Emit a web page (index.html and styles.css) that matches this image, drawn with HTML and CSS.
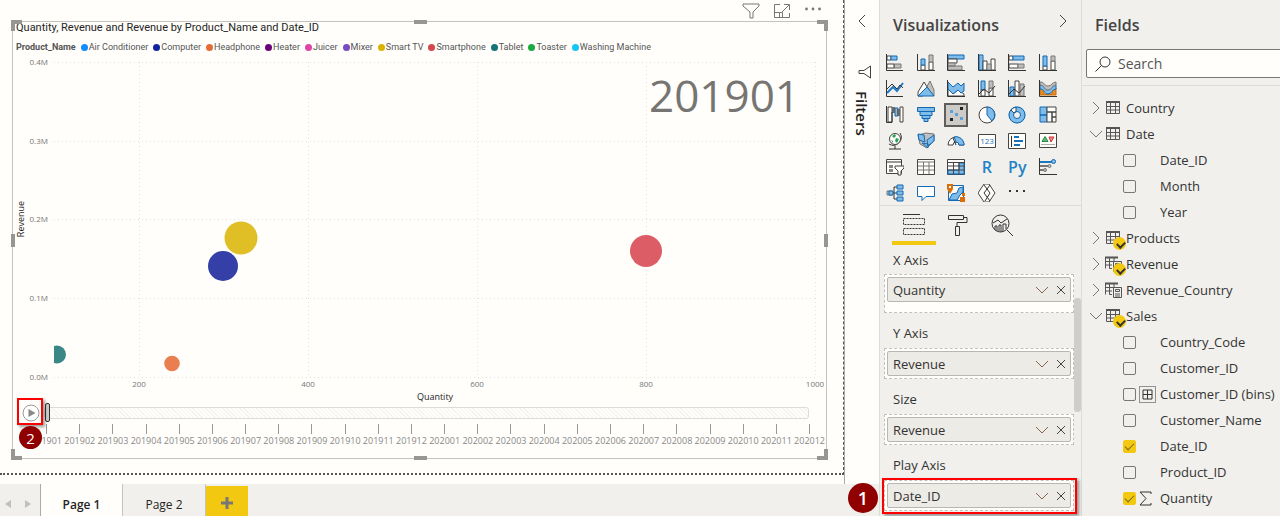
FILE: index.html
```html
<!DOCTYPE html>
<html lang="en">
<head>
  <meta charset="UTF-8" />
  <meta name="viewport" content="width=device-width, initial-scale=1.0"/>
  <title>Product Sales Report</title>
  <link rel="stylesheet" href="styles.css">
</head>
<body>
  <div class="report">
    <div class="report-top">
      <main class="canvas">
        <div class="page-area">
          <div class="visual-tools">
            <button class="icon-btn" aria-label="Filter"><svg width="18" height="16" viewBox="0 0 18 16"><path d="M1 1h16v2l-6 6v6H8V9L1 3z"/></svg></button>
            <button class="icon-btn" aria-label="Focus mode"><svg width="16" height="14" viewBox="0 0 16 14"><path d="M6 .5H.5v13h15V9M.5 8.5h5v5M8 8l7-7M10 .5h5.5V6M5.5 8.5h3v5"/></svg></button>
            <button class="icon-btn" aria-label="More options"><svg width="18" height="14" viewBox="0 0 18 14"><g fill="#777" stroke="none"><circle cx="2.5" cy="5" r="1.4"/><circle cx="9" cy="5" r="1.4"/><circle cx="15.5" cy="5" r="1.4"/></g></svg></button>
          </div>

          <section class="visual">
            <span class="handle top-left"></span><span class="handle top"></span><span class="handle top-right"></span>
            <span class="handle left"></span><span class="handle right"></span>
            <span class="handle bottom-left"></span><span class="handle bottom"></span><span class="handle bottom-right"></span>

            <h1>Quantity, Revenue and Revenue by Product_Name and Date_ID</h1>
            <ul class="legend">
              <li class="legend-title">Product_Name</li>
              <li><i class="dot air"></i>Air Conditioner</li>
              <li><i class="dot computer"></i>Computer</li>
              <li><i class="dot headphone"></i>Headphone</li>
              <li><i class="dot heater"></i>Heater</li>
              <li><i class="dot juicer"></i>Juicer</li>
              <li><i class="dot mixer"></i>Mixer</li>
              <li><i class="dot tv"></i>Smart TV</li>
              <li><i class="dot phone"></i>Smartphone</li>
              <li><i class="dot tablet"></i>Tablet</li>
              <li><i class="dot toaster"></i>Toaster</li>
              <li><i class="dot washing"></i>Washing Machine</li>
            </ul>

            <svg class="plot" viewBox="0 0 813 349">
              <clipPath id="plotArea"><rect x="41" y="0" width="765" height="324"/></clipPath>
              <g class="grid-lines">
                <path d="M41 8.500H802M41 87.500H802M41 165.500H802M41 244.500H802M41 323.500H802"/>
                <path d="M126.500 8V323M295.500 8V323M464.500 8V323M633.500 8V323M802.500 8V323"/>
              </g>
              <g class="tick-text" text-anchor="end">
                <text x="35" y="11">0.4M</text>
                <text x="35" y="90">0.3M</text>
                <text x="35" y="168">0.2M</text>
                <text x="35" y="247">0.1M</text>
                <text x="35" y="326">0.0M</text>
              </g>
              <g class="tick-text" text-anchor="middle">
                <text x="126" y="333">200</text>
                <text x="295" y="333">400</text>
                <text x="464" y="333">600</text>
                <text x="633" y="333">800</text>
                <text x="802" y="333">1000</text>
              </g>
              <text class="axis-title" text-anchor="middle" transform="translate(11 165) rotate(-90)">Revenue</text>
              <text class="axis-title" text-anchor="middle" x="422" y="346">Quantity</text>
              <text class="period" text-anchor="end" x="787" y="58">201901</text>
              <g clip-path="url(#plotArea)">
                <circle cx="228" cy="184" r="16.500" fill="#dfbe26"/>
                <circle cx="210" cy="212" r="15" fill="#3440a8"/>
                <circle cx="633" cy="197" r="16" fill="#dd5d66"/>
                <circle cx="44" cy="300.500" r="9" fill="#3a8787"/>
                <circle cx="159" cy="309.500" r="7.800" fill="#e97f50"/>
              </g>
            </svg>

            <div class="player">
              <button class="play" aria-label="Play"><svg width="18" height="18" viewBox="0 0 18 18"><circle cx="9" cy="9" r="8" fill="#fff" stroke="#999"/><path d="M6.500 5v8l7-4z" fill="#8a8886"/></svg></button>
              <input class="track" type="range" min="0" max="23" value="0" aria-label="Date_ID">
              <span class="callout-box"></span>
              <span class="badge small">2</span>
            </div>
            <ol class="timeline">
              <li>201901</li><li>201902</li><li>201903</li><li>201904</li><li>201905</li><li>201906</li>
              <li>201907</li><li>201908</li><li>201909</li><li>201910</li><li>201911</li><li>201912</li>
              <li>202001</li><li>202002</li><li>202003</li><li>202004</li><li>202005</li><li>202006</li>
              <li>202007</li><li>202008</li><li>202009</li><li>202010</li><li>202011</li><li>202012</li>
            </ol>
          </section>
        </div>
      </main>

      <aside class="filters">
        <button class="icon-btn" aria-label="Expand filters"><svg width="8" height="14" viewBox="0 0 8 14"><path d="M7 1L1 7l6 6"/></svg></button>
        <svg class="funnel" width="13" height="14" viewBox="0 0 13 14"><path d="M12.500 1v12L6 8.500H1v-3h5z"/></svg>
        <h2>Filters</h2>
      </aside>
    </div>

    <nav class="pages">
      <button class="page-arrow" aria-label="Previous page"><svg width="6" height="8" viewBox="0 0 6 8"><path d="M6 0v8L0 4z"/></svg></button>
      <button class="page-arrow" aria-label="Next page"><svg width="6" height="8" viewBox="0 0 6 8"><path d="M0 0v8l6-4z"/></svg></button>
      <button class="page active">Page 1</button>
      <button class="page">Page 2</button>
      <button class="add-page" aria-label="New page"><svg width="12" height="12" viewBox="0 0 12 12"><path d="M6 0v12M0 6h12"/></svg></button>
    </nav>
  </div>

  <aside class="visualizations">
    <header class="pane-header">
      <h2>Visualizations</h2>
      <button class="icon-btn" aria-label="Collapse pane"><svg width="8" height="14" viewBox="0 0 8 14"><path d="M1 1l6 6-6 6"/></svg></button>
    </header>

    <div class="gallery">
      <button aria-label="Stacked bar chart"><svg viewBox="0 0 18 18"><path class="g" d="M8 10h7v4H8z"/><path class="w" d="M1 2h4v4H1zM1 10h7v4H1z"/><path class="b" d="M5 2h6v4H5z"/><path class="k" d="M.5 0v16.500H17"/></svg></button>
      <button aria-label="Stacked column chart"><svg viewBox="0 0 18 18"><path class="w" d="M4 11h4v5H4zM12 8h4v8h-4z"/><path class="b" d="M4 5h4v6H4z"/><path class="g" d="M12 1h4v7h-4z"/><path class="k" d="M.5 0v16.500H18"/></svg></button>
      <button aria-label="Clustered bar chart"><svg viewBox="0 0 18 18"><path class="b" d="M1 1h16v4H1z"/><path class="w" d="M1 5h9v4H1z"/><path class="g" d="M1 9h7v3H1zM1 12h14v4H1z"/><path class="k" d="M.5 0v16.500H18"/></svg></button>
      <button aria-label="Clustered column chart"><svg viewBox="0 0 18 18"><path class="b" d="M1 1h4v15H1z"/><path class="w" d="M5 7h4v9H5zM13 5h4v11h-4z"/><path class="g" d="M9 10h4v6H9z"/><path class="k" d="M.5 0v16.500H18"/></svg></button>
      <button aria-label="100% stacked bar chart"><svg viewBox="0 0 18 18"><path class="w" d="M1 2h4v4H1zM1 10h9v4H1z"/><path class="b" d="M5 2h11v4H5z"/><path class="g" d="M10 10h6v4h-6z"/><path class="k" d="M.5 0v16.500H18"/></svg></button>
      <button aria-label="100% stacked column chart"><svg viewBox="0 0 18 18"><path class="w" d="M4 12h4v4H4zM12 7h4v9h-4z"/><path class="b" d="M4 2h4v10H4z"/><path class="g" d="M12 2h4v5h-4z"/><path class="k" d="M.5 0v16.500H18"/></svg></button>

      <button aria-label="Line chart"><svg viewBox="0 0 18 18"><path class="bl" d="M1 13l6-6 4 4 6-8"/><path class="k" d="M.5 0v16.500H17M1 9l5-5 5 5 3-4 3 3"/></svg></button>
      <button aria-label="Area chart"><svg viewBox="0 0 18 18"><path class="g" d="M9 8l4-7 4 9v6z"/><path class="w" d="M1 12l6-10 5 8-6 6H1z"/><path class="b" d="M1 16l9-9 7 9z"/></svg></button>
      <button aria-label="Stacked area chart"><svg viewBox="0 0 18 18"><path class="w" d="M1 9l5 5 5-4 6 4v2H1z"/><path class="b" d="M1 2l5 5 5-4 3 3 3-3v8l-3 2-3-3-5 4-5-5z"/><path class="k" d="M.5 0v16.500H18"/></svg></button>
      <button aria-label="Line and stacked column chart"><svg viewBox="0 0 18 18"><path class="b" d="M3 1h4v9H3z"/><path class="w" d="M3 10h4v6H3zM11 8h4v8h-4z"/><path class="g" d="M11 1h4v7h-4z"/><path class="k" d="M.5 0v16.500H18M1 14l5-5 5 4 6-7"/></svg></button>
      <button aria-label="Line and clustered column chart"><svg viewBox="0 0 18 18"><path class="b" d="M2 7h4v9H2z"/><path class="w" d="M7 1h4v15H7z"/><path class="g" d="M12 4h4v12h-4z"/><path class="k" d="M.5 0v16.500H18M1 14l5-5 5 4 6-7"/></svg></button>
      <button aria-label="Ribbon chart"><svg viewBox="0 0 18 18"><path class="o" d="M1 8h4v6h8V8h4v7H1z"/><path class="b" d="M1 5c5 0 4 5 8 5s4-5 8-5v4c-4 0-4 5-8 5S6 9 1 9z"/><path class="g" d="M1 2c5 0 4 4 8 4s4-4 8-4v3c-4 0-4 5-8 5S6 5 1 5z"/><path class="k" d="M.5 0v16.500H18"/></svg></button>

      <button aria-label="Waterfall chart"><svg viewBox="0 0 18 18"><path class="w" d="M2 1h4v15H2zM14 1h3v15h-3z"/><path class="b" d="M9 2h3v8H9z"/><path fill="#666" d="M6 1h3v6H6zM11 3h3v7h-3z"/><path class="k" d="M.5 0v16.500H6V6"/></svg></button>
      <button aria-label="Funnel chart"><svg viewBox="0 0 18 18"><path class="b" d="M.5 1.500h17v4H.5zM3 5.500h12v4H3zM5 9.500h8v3H5zM7 12.500h4v3H7z"/></svg></button>
      <button class="selected" aria-label="Scatter chart"><svg viewBox="0 0 18 18"><path fill="#222" d="M13 1h3v3h-3zM3 12h3v3H3z"/><path fill="#5aa2dc" d="M3 4h3v3H3zM8 7h3v3H8zM13 11h3v3h-3z"/></svg></button>
      <button aria-label="Pie chart"><svg viewBox="0 0 18 18"><circle class="w" cx="9" cy="9" r="8"/><path class="b" d="M9 9V1a8 8 0 0 1 5 14z"/></svg></button>
      <button aria-label="Donut chart"><svg viewBox="0 0 18 18"><circle cx="9" cy="9" r="6" fill="none" stroke="#80bce9" stroke-width="5"/><path class="w" d="M3 4a8 8 0 0 1 5-3v5a3 3 0 0 0-2 1z"/><g fill="none" stroke="#0f66ae"><circle cx="9" cy="9" r="8"/><circle cx="9" cy="9" r="3.500"/></g></svg></button>
      <button aria-label="Treemap"><svg viewBox="0 0 18 18"><path class="b" d="M1 1h7v8H1zM1 9h7v7H1z"/><path class="w" d="M8 1h9v5H8zM8 6h5v10H8zM13 6h4v5h-4zM13 11h4v5h-4z"/></svg></button>

      <button aria-label="Map"><svg viewBox="0 0 18 18"><path class="k" d="M14 1a8 8 0 0 1-11 11M9 14v3M3 17h12"/><circle class="w" cx="9" cy="7" r="5.500"/><path fill="#2da058" d="M6 4l3-2 1 2-2 2zM10 6l3 1-2 4-2-2zM5 8l2 1v2z"/></svg></button>
      <button aria-label="Filled map"><svg viewBox="0 0 18 18"><path class="g" d="M1 3l8-2 8 1v7l-7 7-7-4z"/><path class="b" d="M1 2l6 1 1 7-6-2zM10 8l7-5v6l-6 5zM5 11l6 1v4z"/></svg></button>
      <button aria-label="Gauge"><svg viewBox="0 0 18 18"><path class="w" d="M1 13a8 8 0 0 1 16 0h-5a3 3 0 0 0-6 0z"/><path class="b" d="M7 5a8 8 0 0 1 10 8h-5a3 3 0 0 0-3-3z"/><path class="k" d="M9 13L6 6"/></svg></button>
      <button aria-label="Card"><svg viewBox="0 0 18 18"><path class="w" d="M.5 2.500h17v13H.5z"/><text x="9" y="12" text-anchor="middle" class="card-num">123</text></svg></button>
      <button aria-label="Multi-row card"><svg viewBox="0 0 18 18"><path class="w" d="M.5 1.500h17v15H.5z"/><path class="k" d="M3.500 4v11"/><path stroke="#1572bb" stroke-width="2" d="M6 5h5M6 9h9M6 13h6"/></svg></button>
      <button aria-label="KPI"><svg viewBox="0 0 18 18"><path class="w" d="M.5 1.500h17v14H.5z"/><path fill="#5db97c" stroke="#238b48" d="M3 9.500l3-5 3 5z"/><path fill="#ef8a86" stroke="#cf3437" d="M10 5h5l-3 5z"/><path stroke="#aaa" d="M2 12.500h14"/></svg></button>

      <button aria-label="Slicer"><svg viewBox="0 0 18 18"><path class="w" d="M.5 1.500h15v14H.5z"/><path class="k" d="M1 4h15"/><path fill="#888" d="M3 7h4v3H3zM3 11h4v3H3z"/><path class="w" d="M9 8h9v2l-3 3v4h-3v-4L9 10z"/></svg></button>
      <button aria-label="Table"><svg viewBox="0 0 18 18"><path class="w" d="M.5 1.500h17v15H.5z"/><path stroke="#777" d="M1 4h16M1 8h16M1 12h16M6.500 4v12M12 4v12"/></svg></button>
      <button aria-label="Matrix"><svg viewBox="0 0 18 18"><path class="w" d="M.5 1.500h17v15H.5z"/><path class="b" d="M12 5h5v11H1v-4h11z"/><path stroke="#444" d="M1 4.500h16M1 8h16M1 12h16M6.500 4v12M12 4v12"/></svg></button>
      <button class="script-visual" aria-label="R script visual">R</button>
      <button class="script-visual" aria-label="Python visual">Py</button>
      <button aria-label="Key influencers"><svg viewBox="0 0 18 18"><path class="k" d="M.5 0v16.500H18"/><path stroke="#1978be" stroke-width="2" d="M1 4h12"/><path stroke="#777" stroke-width="2" d="M1 8h8M1 12h4"/><circle class="b" cx="14.500" cy="3.500" r="2"/><circle class="g" cx="10.500" cy="8" r="1.500"/><circle class="g" cx="6" cy="12" r="1.500"/></svg></button>

      <button aria-label="Decomposition tree"><svg viewBox="0 0 18 18"><path class="k" d="M6 9h5M11 3H8v12h3"/><path class="g" d="M1 7h5v4H1z"/><path class="b" d="M3 7h4v4H3zM11 1h6v4h-6zM11 7h6v4h-6zM11 13h6v4h-6z"/></svg></button>
      <button aria-label="Q&amp;A"><svg viewBox="0 0 18 18"><path fill="#fff" stroke="#1669b0" d="M.5 2.500h17v10H9l-4 4v-4H.5z"/></svg></button>
      <button aria-label="ArcGIS map"><svg viewBox="0 0 18 18"><path fill="#fffefb" stroke="#1269b1" d="M1.500 1.500h15v15h-15z"/><path class="b" d="M2 16l3-6 5-1 2-5 4-1v5l-3 3-3 5z"/><path fill="#dc6d0b" d="M0 0h6v5l-3 5-3-5zM13 13h5v5h-5zM15 9h3v3h-3z"/><path fill="#fff" d="M2 2h2v2H2z"/></svg></button>
      <button aria-label="Power Apps"><svg viewBox="0 0 18 18"><path class="w" d="M6 0h5l6 9-6 9H6L0 9z"/><path class="k" d="M6 1l6 8-5 8M12 1L6 9l6 8"/></svg></button>
      <button aria-label="More visuals"><svg viewBox="0 0 18 18"><path fill="#333" d="M1 6h2v2H1zM8 6h2v2H8zM15 6h2v2h-2z"/></svg></button>
    </div>

    <div class="pane-tabs">
      <button class="active" aria-label="Fields"><svg width="22" height="22" viewBox="0 0 22 22"><path d="M0 .5h17"/><path stroke-dasharray="2 1" d="M.500 4.500h21v6H.500zM.500 14.500h21v6H.500z"/></svg></button>
      <button aria-label="Format"><svg width="20" height="22" viewBox="0 0 20 22"><path d="M.5 1.500h15v4H.5zM15 3.500h4v5H9v4M7.500 12.500h4v9h-4z"/></svg></button>
      <button aria-label="Analytics"><svg width="22" height="22" viewBox="0 0 22 22"><circle cx="9.500" cy="9.500" r="8.500"/><path d="M16 16l6 6M2 9l5-3 3 3 6-4M4 16v-4h2v5M8 17v-6h2v7M12 17v-7h3v5"/></svg></button>
    </div>

    <div class="wells-scroll">
      <div class="wells">
        <section class="well roomy">
          <h3>X Axis</h3>
          <div class="drop"><div class="pill"><span>Quantity</span>
            <button class="menu" aria-label="Quantity options"><svg width="14" height="8" viewBox="0 0 14 8"><path d="M1 1l6 6 6-6"/></svg></button>
            <button aria-label="Remove Quantity"><svg width="10" height="10" viewBox="0 0 10 10"><path d="M1 1l8 8M9 1L1 9"/></svg></button>
          </div></div>
        </section>
        <section class="well">
          <h3>Y Axis</h3>
          <div class="drop"><div class="pill"><span>Revenue</span>
            <button class="menu" aria-label="Revenue options"><svg width="14" height="8" viewBox="0 0 14 8"><path d="M1 1l6 6 6-6"/></svg></button>
            <button aria-label="Remove Revenue"><svg width="10" height="10" viewBox="0 0 10 10"><path d="M1 1l8 8M9 1L1 9"/></svg></button>
          </div></div>
        </section>
        <section class="well">
          <h3>Size</h3>
          <div class="drop"><div class="pill"><span>Revenue</span>
            <button class="menu" aria-label="Size options"><svg width="14" height="8" viewBox="0 0 14 8"><path d="M1 1l6 6 6-6"/></svg></button>
            <button aria-label="Remove size"><svg width="10" height="10" viewBox="0 0 10 10"><path d="M1 1l8 8M9 1L1 9"/></svg></button>
          </div></div>
        </section>
        <section class="well">
          <h3>Play Axis</h3>
          <div class="drop"><div class="pill"><span>Date_ID</span>
            <button class="menu" aria-label="Date_ID options"><svg width="14" height="8" viewBox="0 0 14 8"><path d="M1 1l6 6 6-6"/></svg></button>
            <button aria-label="Remove Date_ID"><svg width="10" height="10" viewBox="0 0 10 10"><path d="M1 1l8 8M9 1L1 9"/></svg></button>
          </div>
          <span class="callout-box"></span>
          <span class="badge">1</span>
          </div>
        </section>
      </div>
      <div class="scrollbar"></div>
    </div>
  </aside>

  <aside class="fields">
    <header class="pane-header"><h2>Fields</h2></header>
    <label class="search">
      <svg width="16" height="16" viewBox="0 0 16 16"><circle cx="10" cy="6" r="5"/><path d="M6.500 9.500L.5 15.500"/></svg>
      <input type="text" placeholder="Search" aria-label="Search">
    </label>

    <svg class="defs" width="0" height="0">
      <symbol id="right" viewBox="0 0 14 14"><path d="M4 1l6 6-6 6"/></symbol>
      <symbol id="down" viewBox="0 0 14 14"><path d="M1 4l6 6 6-6"/></symbol>
      <symbol id="table" viewBox="0 0 17 16"><path d="M1.500 2.500h13v11h-13zM1 6.500h14M1 10h14M5.500 3v11M10.500 3v11"/><path stroke-width="2" d="M1 2h14"/></symbol>
      <symbol id="measure" viewBox="0 0 17 16"><path d="M7 12.500H4.500V2M.5 1v11.500M9 2v3M0 5.500h13M0 9h7"/><path stroke-width="2" d="M0 1.500h13"/><path fill="#f1f0ec" d="M8.500 5.500h8v10h-8z"/><path d="M10.500 7.500h4v2h-4zM10 12h5M10 14h5"/></symbol>
    </svg>

    <ul class="tree">
      <li class="table-row"><svg class="arrow"><use href="#right"/></svg><span class="table-icon"><svg><use href="#table"/></svg></span>Country</li>
      <li class="table-row"><svg class="arrow"><use href="#down"/></svg><span class="table-icon"><svg><use href="#table"/></svg></span>Date</li>
      <li><label class="field"><input type="checkbox"><span class="kind"></span>Date_ID</label></li>
      <li><label class="field"><input type="checkbox"><span class="kind"></span>Month</label></li>
      <li><label class="field"><input type="checkbox"><span class="kind"></span>Year</label></li>
      <li class="table-row"><svg class="arrow"><use href="#right"/></svg><span class="table-icon used"><svg><use href="#table"/></svg></span>Products</li>
      <li class="table-row"><svg class="arrow"><use href="#right"/></svg><span class="table-icon used"><svg><use href="#measure"/></svg></span>Revenue</li>
      <li class="table-row"><svg class="arrow"><use href="#right"/></svg><span class="table-icon"><svg><use href="#measure"/></svg></span>Revenue_Country</li>
      <li class="table-row"><svg class="arrow"><use href="#down"/></svg><span class="table-icon used"><svg><use href="#table"/></svg></span>Sales</li>
      <li><label class="field"><input type="checkbox"><span class="kind"></span>Country_Code</label></li>
      <li><label class="field"><input type="checkbox"><span class="kind"></span>Customer_ID</label></li>
      <li><label class="field"><input type="checkbox"><span class="kind"><svg width="17" height="17" viewBox="0 0 17 17"><path stroke-dasharray="1 1" d="M.5.500h16v16H.5z"/><path d="M4 4h9v9H4zM8.500 4v9M4 8.500h9"/></svg></span>Customer_ID (bins)</label></li>
      <li><label class="field"><input type="checkbox"><span class="kind"></span>Customer_Name</label></li>
      <li><label class="field"><input type="checkbox" checked><span class="kind"></span>Date_ID</label></li>
      <li><label class="field"><input type="checkbox"><span class="kind"></span>Product_ID</label></li>
      <li><label class="field"><input type="checkbox" checked><span class="kind"><svg width="13" height="15" viewBox="0 0 13 15"><path d="M12 3V1H1l6 6.500L1 14h11v-2"/></svg></span>Quantity</label></li>
    </ul>
  </aside>
</body>
</html>
```
FILE: styles.css
```css
* {
  box-sizing: border-box;
}

body {
  margin: 0;
  height: 100vh;
  display: flex;
  overflow: hidden;
  background: #f1f0ec;
  color: #333;
  font-family: "Open Sans", "Noto Sans", sans-serif;
  font-size: 13px;
}

h1, h2, h3, ul, ol {
  margin: 0;
  padding: 0;
  list-style: none;
}

button {
  display: flex;
  align-items: center;
  justify-content: center;
  padding: 0;
  border: none;
  background: none;
  color: inherit;
  font: inherit;
  cursor: pointer;
}

svg {
  display: block;
  fill: none;
}

.icon-btn svg {
  stroke: #777;
}

/* report canvas */
.report {
  flex: 1;
  min-width: 0;
  display: flex;
  flex-direction: column;
}

.report-top {
  flex: 1;
  display: flex;
  min-height: 0;
}

.canvas {
  flex: 1;
  min-width: 0;
  padding-bottom: 9px;
  background: #fffefb;
  border-right: 1px solid #aaa;
}

.page-area {
  height: 100%;
  padding: 0 16px 0 12px;
  border-right: 1px dashed #555;
  border-bottom: 2px dotted #555;
}

.visual-tools {
  display: flex;
  justify-content: flex-end;
  align-items: center;
  gap: 14px;
  height: 21px;
  padding-right: 5px;
}

.visual {
  position: relative;
  height: 438px;
  border: 1px solid #c4c3c0;
}

.visual h1 {
  padding-left: 3px;
  font-family: Roboto, sans-serif;
  font-size: 11px;
  font-weight: 400;
  line-height: 12px;
  white-space: nowrap;
  color: #252423;
}

.legend {
  display: flex;
  gap: 5px;
  height: 20px;
  padding-left: 3px;
  font-family: Roboto, sans-serif;
  font-size: 9px;
  line-height: 26px;
  white-space: nowrap;
  color: #555;
}

.legend li {
  display: flex;
  align-items: center;
  gap: 1px;
  height: 26px;
}

.legend-title {
  font-weight: 700;
}

.dot {
  width: 7px;
  height: 7px;
  border-radius: 50%;
}

.air { background: #118dff; }
.computer { background: #12239e; }
.headphone { background: #e66c37; }
.heater { background: #6b007b; }
.juicer { background: #e044a7; }
.mixer { background: #744ec2; }
.tv { background: #d9b300; }
.phone { background: #d64550; }
.tablet { background: #197278; }
.toaster { background: #1aab40; }
.washing { background: #15c6f4; }

.plot {
  width: 100%;
}

.grid-lines {
  stroke: #e3e2df;
  stroke-dasharray: 1 3;
}

.tick-text {
  font-size: 8px;
  fill: #777;
}

.axis-title {
  font-size: 9px;
  fill: #252423;
}

.period {
  font-size: 44px;
  fill: #777572;
}

.handle {
  position: absolute;
  width: 11px;
  height: 11px;
  border: 0 solid #979693;
}

.top-left { top: -2px; left: -2px; border-width: 4px 0 0 4px; }
.top-right { top: -2px; right: -2px; border-width: 4px 4px 0 0; }
.bottom-left { bottom: -2px; left: -2px; border-width: 0 0 4px 4px; }
.bottom-right { bottom: -2px; right: -2px; border-width: 0 4px 4px 0; }
.top { top: -2px; left: 50%; width: 13px; height: 4px; border-top-width: 4px; margin-left: -6px; }
.bottom { bottom: -2px; left: 50%; width: 13px; height: 4px; border-top-width: 4px; margin-left: -6px; }
.left { top: 50%; left: -2px; width: 4px; height: 13px; border-left-width: 4px; margin-top: -6px; }
.right { top: 50%; right: -2px; width: 4px; height: 13px; border-left-width: 4px; margin-top: -6px; }

.player {
  position: relative;
  display: flex;
  align-items: center;
  gap: 4px;
  height: 19px;
  padding: 0 17px 0 9px;
}

.track {
  flex: 1;
  min-width: 0;
  height: 12px;
  margin: 0;
  appearance: none;
  border: 1px solid #dddcd9;
  border-radius: 3px;
  background: repeating-linear-gradient(45deg, #f5f4f1 0 1px, #fffefb 1px 3px);
}

.track::-webkit-slider-thumb {
  appearance: none;
  width: 5px;
  height: 19px;
  border: 1px solid #333;
  border-radius: 2px;
  background: #ccc;
}

.timeline {
  display: flex;
  padding-left: 17px;
  margin-top: 2px;
  font-size: 9px;
  line-height: 13px;
  color: #888;
}

.timeline li {
  flex: 1;
  width: 0;
  display: flex;
  flex-direction: column;
  align-items: center;
}

.timeline li::before {
  content: "";
  width: 1px;
  height: 10px;
  background: #999;
}

/* numbered callouts */
.callout-box {
  position: absolute;
  border: 2px solid #f00;
  box-shadow: 2px 2px 3px rgba(0, 0, 0, 0.4);
  pointer-events: none;
}

.player .callout-box {
  top: -5px;
  left: 4px;
  width: 26px;
  height: 27px;
}

.drop .callout-box {
  inset: -3px -4px -4px -3px;
}

.badge {
  position: absolute;
  display: flex;
  align-items: center;
  justify-content: center;
  width: 30px;
  height: 30px;
  border-radius: 50%;
  background: #900000;
  color: #fff;
  font-size: 18px;
  font-weight: 600;
}

.badge.small {
  top: 23px;
  left: 6px;
  width: 23px;
  height: 23px;
  font-size: 15px;
  font-weight: 400;
  z-index: 1;
}

.drop .badge {
  top: 2px;
  left: -37px;
}

/* filters strip */
.filters {
  width: 34px;
  display: flex;
  flex-direction: column;
  align-items: center;
  padding-top: 14px;
  background: #fffefb;
}

.filters .icon-btn svg,
.pane-header .icon-btn svg {
  stroke: #444;
}

.funnel {
  margin: 37px 0 12px 4px;
  stroke: #444;
}

.filters h2 {
  writing-mode: vertical-rl;
  font-size: 15px;
  font-weight: 600;
  line-height: 20px;
  color: #252423;
}

/* page tabs */
.pages {
  display: flex;
  height: 32px;
}

.page-arrow {
  width: 16px;
}

.page-arrow + .page-arrow {
  width: 24px;
}

.page-arrow svg {
  margin-top: 7px;
  fill: #c1c0bd;
}

.page {
  width: 83px;
  padding-top: 8px;
  border-right: 1px solid #c4c3c0;
  font-size: 12px;
  color: #252423;
}

.page.active {
  border-left: 1px solid #aaa;
  background: #fffefb;
  font-weight: 600;
}

.add-page {
  width: 42px;
  margin-top: 2px;
  padding-top: 4px;
  background: #f2c811;
}

.add-page svg {
  stroke: #777;
  stroke-width: 3;
}

/* visualizations pane */
.visualizations {
  width: 202px;
  border-left: 1px solid #dddcd9;
  display: flex;
  flex-direction: column;
}

.pane-header {
  display: flex;
  justify-content: space-between;
  align-items: flex-start;
  height: 50px;
  padding: 14px 14px 0 13px;
}

.pane-header h2 {
  font-size: 16px;
  font-weight: 600;
  line-height: 22px;
  color: #444;
}

.gallery {
  display: grid;
  grid-template-columns: repeat(6, 1fr);
  grid-auto-rows: 26px;
  justify-items: center;
  align-items: center;
  height: 155px;
  padding-right: 18px;
}

.gallery button {
  width: 24px;
  height: 24px;
}

.gallery svg {
  width: 18px;
  height: 18px;
}

.gallery .selected {
  border: 2px solid #605e5c;
  background: #cccbc8;
}

.b { fill: #80bce9; stroke: #1269b1; }
.g { fill: #c0bfbd; stroke: #777; }
.w { fill: #fffefb; stroke: #444; }
.o { fill: #e88a25; stroke: #c96a0a; }
.k { stroke: #333; }
.bl { stroke: #1e7ac6; stroke-width: 2; }

.card-num {
  font-size: 8px;
  fill: #1978be;
}

.script-visual {
  font-size: 16px;
  font-weight: 600;
  color: #2482c6;
}

.pane-tabs {
  display: flex;
  height: 43px;
  padding-left: 12px;
  border-top: 1px solid #dddcd9;
}

.pane-tabs button {
  width: 44px;
  height: 39px;
  padding-top: 2px;
  border-bottom: 4px solid transparent;
}

.pane-tabs .active {
  border-color: #f2c811;
}

.pane-tabs svg {
  stroke: #333;
}

.wells-scroll {
  flex: 1;
  min-height: 0;
  display: flex;
}

.wells {
  flex: 1;
  padding-left: 4px;
}

.well {
  margin-bottom: 8px;
}

.well h3 {
  margin-bottom: 3px;
  padding-left: 9px;
  font-size: 13px;
  font-weight: 400;
  line-height: 24px;
}

.drop {
  position: relative;
  height: 31px;
  padding: 2px;
  border: 1px dashed #c1c0bd;
  background: #fffefb;
}

.roomy .drop {
  height: 39px;
  margin-top: -1px;
}

.pill {
  display: flex;
  align-items: center;
  height: 25px;
  padding: 0 4px 0 5px;
  border: 1px solid #b9b7b4;
  border-radius: 2px;
  background: #edebe6;
}

.pill span {
  flex: 1;
}

.pill button {
  padding-left: 7px;
}

.pill svg {
  stroke: #444;
}

.pill .menu svg {
  stroke: #8a6250;
}

.scrollbar {
  width: 7px;
  height: 114px;
  margin-top: 50px;
  border-radius: 3px;
  background: #cfcecb;
}

/* fields pane */
.fields {
  width: 199px;
  border-left: 1px solid #dddcd9;
  white-space: nowrap;
}

.search {
  display: flex;
  align-items: center;
  gap: 7px;
  height: 29px;
  margin: -1px -4px 0 4px;
  padding-left: 8px;
  border: 1px solid #777;
  border-radius: 2px;
  background: #fffefb;
}

.search svg {
  stroke: #333;
}

.search input {
  flex: 1;
  min-width: 0;
  padding: 0;
  border: none;
  outline: none;
  background: none;
  font: inherit;
  font-size: 14px;
}

.search input::placeholder {
  color: #555;
}

.defs {
  position: absolute;
}

.tree {
  margin-top: 7px;
  padding-top: 9px;
  border-top: 1px solid #dddcd9;
}

.table-row,
.field {
  display: flex;
  align-items: center;
  height: 26px;
}

.table-row {
  padding-left: 7px;
}

.arrow {
  width: 14px;
  height: 14px;
  margin-right: 2px;
  stroke: #777;
}

.table-icon {
  position: relative;
  width: 21px;
}

.table-icon svg {
  width: 17px;
  height: 16px;
  stroke: #555;
}

.table-icon.used::before {
  content: "";
  position: absolute;
  top: 7px;
  left: 8px;
  width: 13px;
  height: 13px;
  border-radius: 50%;
  background: #f2c811;
}

.table-icon.used::after {
  content: "";
  position: absolute;
  top: 11px;
  left: 12px;
  width: 6px;
  height: 4px;
  border-left: 2px solid #333;
  border-bottom: 2px solid #333;
  transform: rotate(-45deg);
}

.field {
  padding-left: 41px;
}

.field input {
  display: grid;
  place-items: center;
  width: 13px;
  height: 13px;
  margin: 0;
  appearance: none;
  border: 1px solid #777;
  border-radius: 2px;
}

.field input:checked {
  border-color: #f2c811;
  background: #f2c811;
}

.field input:checked::before {
  content: "";
  width: 8px;
  height: 4px;
  margin-bottom: 2px;
  border-left: 1px solid #7d6a20;
  border-bottom: 1px solid #7d6a20;
  transform: rotate(-45deg);
}

.kind {
  width: 24px;
  padding-left: 3px;
}

.kind svg {
  stroke: #333;
}
```
